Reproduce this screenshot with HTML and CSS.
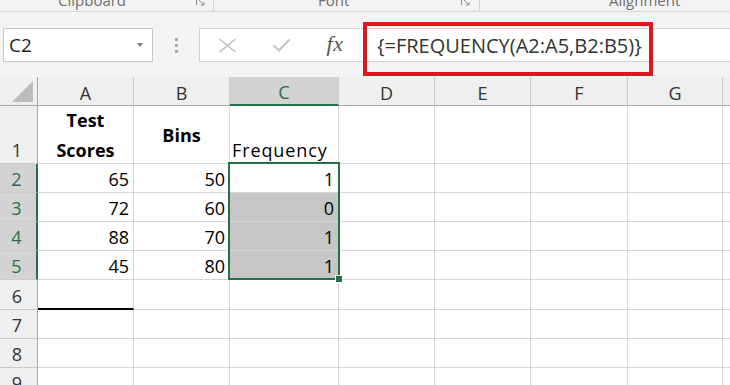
FILE: index.html
```html
<!DOCTYPE html>
<html lang="en">
<head>
<meta charset="utf-8">
<title>Excel FREQUENCY</title>
<link rel="stylesheet" href="styles.css">
</head>
<body>
<div class="app">
  <div class="ribbon">
    <div class="group g-clip">
      <span class="label">Clipboard</span>
      <svg class="launcher" width="9" height="9" viewBox="0 0 9 9"><path d="M0.5 8V0.5H8" fill="none" stroke="#8a8a8a"/><path d="M3 3L8 8M5 8H8V5" fill="none" stroke="#8a8a8a"/></svg>
    </div>
    <div class="group g-font">
      <span class="label">Font</span>
      <svg class="launcher l2" width="9" height="9" viewBox="0 0 9 9"><path d="M0.5 8V0.5H8" fill="none" stroke="#8a8a8a"/><path d="M3 3L8 8M5 8H8V5" fill="none" stroke="#8a8a8a"/></svg>
    </div>
    <div class="group g-align">
      <span class="label">Alignment</span>
    </div>
  </div>

  <div class="fbar">
    <div class="namebox"><span>C2</span><span class="arrow"></span></div>
    <div class="grip"><i></i><i></i><i></i></div>
    <div class="finput">
      <div class="fbtns">
        <div class="fbtn">
          <svg width="19" height="15" viewBox="0 0 19 15"><path d="M1.5 1L17.5 14M17.5 1L1.5 14" stroke="#bdbdbd" stroke-width="1.6" fill="none"/></svg>
        </div>
        <div class="fbtn">
          <svg width="19" height="14" viewBox="0 0 19 14"><path d="M1.5 7.5L7 12.5L17.5 1.5" stroke="#c4c4c4" stroke-width="2.2" fill="none"/></svg>
        </div>
        <div class="fbtn fx">fx</div>
      </div>
      <div class="ftext">{=FREQUENCY(A2:A5,B2:B5)}</div>
      <div class="annot"></div>
    </div>
  </div>

  <div class="sheet">
    <div class="corner"><svg width="22" height="21" viewBox="0 0 22 21"><path d="M21 0V21H0Z" fill="#bcbcbc"/></svg></div>
    <div class="ch">A</div><div class="ch">B</div><div class="ch sel">C</div><div class="ch">D</div><div class="ch">E</div><div class="ch">F</div><div class="ch">G</div><div class="ch last"></div>

    <div class="rh bottom">1</div>
    <div class="c title"><div class="title-in">Test<br>Scores</div></div>
    <div class="c bins">Bins</div>
    <div class="c freq">Frequency</div>
    <div class="c"></div><div class="c"></div><div class="c"></div><div class="c"></div><div class="c last"></div>

    <div class="rh sel">2</div>
    <div class="c">65</div><div class="c">50</div><div class="c">1</div>
    <div class="c"></div><div class="c"></div><div class="c"></div><div class="c"></div><div class="c last"></div>

    <div class="rh sel">3</div>
    <div class="c">72</div><div class="c">60</div><div class="c shade">0</div>
    <div class="c"></div><div class="c"></div><div class="c"></div><div class="c"></div><div class="c last"></div>

    <div class="rh sel">4</div>
    <div class="c">88</div><div class="c">70</div><div class="c shade">1</div>
    <div class="c"></div><div class="c"></div><div class="c"></div><div class="c"></div><div class="c last"></div>

    <div class="rh sel">5</div>
    <div class="c">45</div><div class="c">80</div><div class="c shade">1</div>
    <div class="c"></div><div class="c"></div><div class="c"></div><div class="c"></div><div class="c last"></div>

    <div class="rh">6</div>
    <div class="c underline"></div><div class="c"></div><div class="c"></div>
    <div class="c"></div><div class="c"></div><div class="c"></div><div class="c"></div><div class="c last"></div>

    <div class="rh">7</div>
    <div class="c"></div><div class="c"></div><div class="c"></div>
    <div class="c"></div><div class="c"></div><div class="c"></div><div class="c"></div><div class="c last"></div>

    <div class="rh">8</div>
    <div class="c"></div><div class="c"></div><div class="c"></div>
    <div class="c"></div><div class="c"></div><div class="c"></div><div class="c"></div><div class="c last"></div>

    <div class="rh">9</div>
    <div class="c"></div><div class="c"></div><div class="c"></div>
    <div class="c"></div><div class="c"></div><div class="c"></div><div class="c"></div><div class="c last"></div>

    <div class="selection"></div>
    <div class="handle"></div>
  </div>
</div>
</body>
</html>
```

FILE: styles.css
```css
* { box-sizing: border-box; }

html, body {
  margin: 0;
  padding: 0;
}

body {
  width: 730px;
  height: 385px;
  overflow: hidden;
  background: #f3f3f3;
  font-family: "Open Sans", "Noto Sans", sans-serif;
}

.app {
  width: 730px;
  height: 385px;
  overflow: hidden;
}

/* ribbon group labels (cut off at top, as in the reference) */
.ribbon {
  display: flex;
  height: 12px;
  border-bottom: 1px solid #d6d6d6;
  overflow: hidden;
  color: #6e6e6e;
  font-size: 15px;
  line-height: 20px;
}

.group {
  display: flex;
  align-items: flex-start;
  border-right: 1px solid #d2d2d2;
}

.g-clip { width: 214px; padding-left: 58px; }
.g-font { width: 266px; padding-left: 104px; }
.g-align { flex: 1; padding-left: 129px; border-right: none; }

.label { margin-top: -10px; white-space: nowrap; }

.launcher { margin-left: auto; margin-right: 8px; margin-top: -3px; flex: none; }
.launcher.l2 { margin-right: 9px; }

/* formula bar */
.fbar {
  display: flex;
  height: 34px;
  margin-top: 16px;
}

.namebox {
  width: 150px;
  margin-left: 3px;
  border: 1px solid #c8c8c8;
  background: #fff;
  display: flex;
  align-items: center;
  padding-left: 5px;
  font-size: 19px;
  color: #222;
}

.namebox .arrow {
  margin-left: auto;
  margin-right: 9px;
  width: 0;
  height: 0;
  border-top: 4px solid #7a7a7a;
  border-left: 3.5px solid transparent;
  border-right: 3.5px solid transparent;
}

.grip {
  width: 46px;
  display: flex;
  flex-direction: column;
  align-items: center;
  justify-content: center;
  gap: 3px;
}

.grip i {
  display: block;
  width: 3px;
  height: 3px;
  background: #ababab;
}

.finput {
  flex: 1;
  position: relative;
  border: 1px solid #d2d2d2;
  border-right: none;
  background: #fff;
  display: flex;
  align-items: center;
}

.fbtns { display: flex; width: 162px; height: 100%; }

.fbtn {
  width: 54px;
  display: flex;
  align-items: center;
  justify-content: center;
}

.fbtn.fx {
  font-family: "Liberation Serif", "DejaVu Serif", serif;
  font-style: italic;
  font-size: 22px;
  color: #555;
  letter-spacing: 0.5px;
  padding-bottom: 2px;
}

.ftext {
  padding-left: 15px;
  font-size: 20px;
  color: #333;
  white-space: nowrap;
}

.annot {
  position: absolute;
  left: 163px;
  top: -7px;
  width: 290px;
  height: 54px;
  border: 4px solid #e2141c;
}

/* sheet grid */
.sheet {
  position: relative;
  margin-top: 15px;
  display: grid;
  grid-template-columns: 38px 96px 96px 109px 96px 96px 97px 95px 1fr;
  grid-template-rows: 29px 58px 29px 29px 29px 29px 30px 29px 29px 29px;
  background: #fff;
}

.corner {
  background: #efefef;
  border-right: 1px solid #ababab;
  border-bottom: 1px solid #ababab;
  display: flex;
  align-items: flex-end;
  justify-content: flex-end;
  padding: 0 3px 3px 0;
}

.ch {
  background: #efefef;
  border-right: 1px solid #cacaca;
  border-bottom: 1px solid #ababab;
  display: flex;
  align-items: center;
  justify-content: center;
  font-size: 18px;
  line-height: 22px;
  color: #333;
  padding-top: 3px;
}

.ch.sel {
  background: #d3d3d3;
  color: #217346;
  border-bottom: 2px solid #217346;
}

.ch.last { border-right: none; }

.rh {
  background: #efefef;
  border-right: 1px solid #ababab;
  border-bottom: 1px solid #cacaca;
  display: flex;
  align-items: center;
  justify-content: center;
  font-size: 18px;
  line-height: 22px;
  color: #333;
  padding: 2px 3px 0 0;
}

.rh.sel {
  background: #d3d3d3;
  color: #217346;
  border-right: 2px solid #217346;
}

.rh.bottom {
  align-items: flex-end;
  padding: 0 3px 2px 0;
}

.c {
  border-right: 1px solid #d6d6d6;
  border-bottom: 1px solid #d6d6d6;
  display: flex;
  align-items: flex-end;
  justify-content: flex-end;
  padding: 0 4px 2px 4px;
  font-size: 18px;
  line-height: 22px;
  color: #000;
}

.c.last { border-right: none; }

.c.title {
  justify-content: center;
  text-align: center;
  font-weight: 700;
  line-height: 30px;
  padding: 0;
}

.title-in { margin-bottom: -2px; }

.c.bins {
  justify-content: center;
  align-items: center;
  font-weight: 700;
  padding: 0;
}

.c.freq {
  justify-content: flex-start;
  padding-left: 2px;
  letter-spacing: 0.9px;
}

.c.shade { background: #c6c6c6; }

.c.underline { border-bottom: 2px solid #000; }

.selection {
  position: absolute;
  left: 228px;
  top: 85px;
  width: 112px;
  height: 118px;
  border: 2px solid #217346;
  pointer-events: none;
}

.handle {
  position: absolute;
  left: 335px;
  top: 198px;
  width: 8px;
  height: 8px;
  background: #217346;
  border: 1px solid #fff;
}
```
